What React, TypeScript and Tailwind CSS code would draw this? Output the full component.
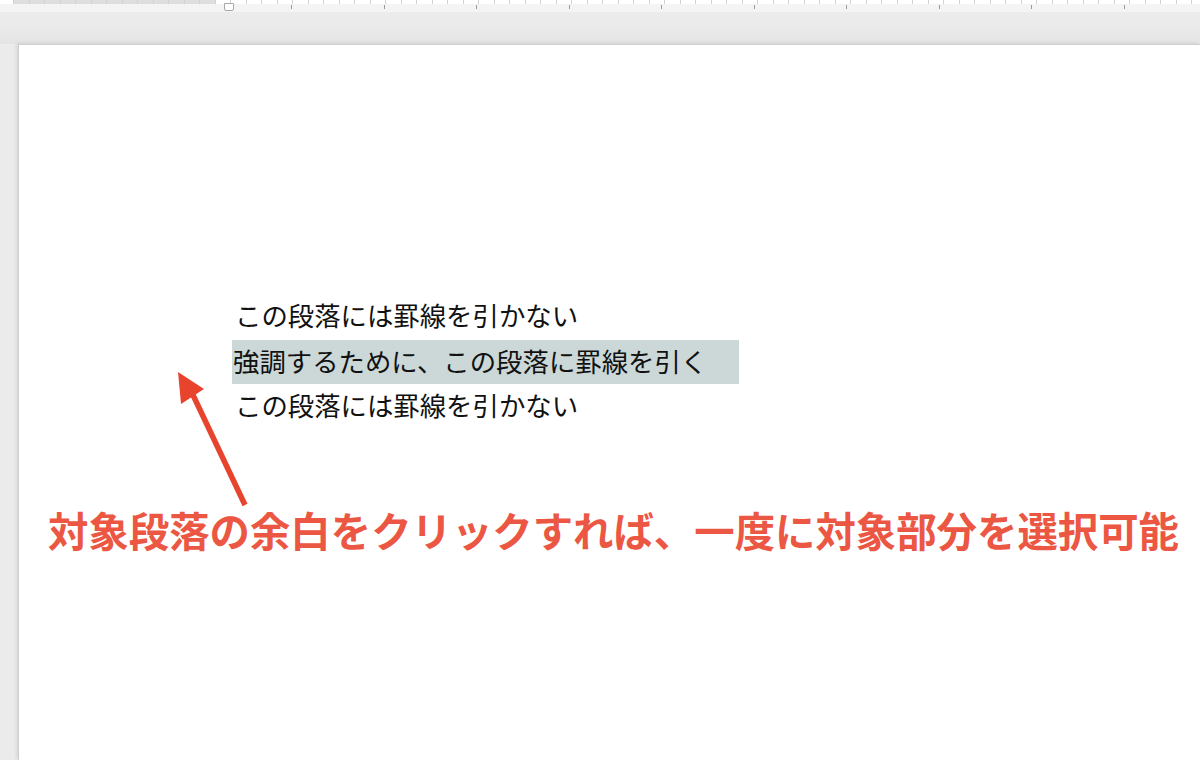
import React from "react";

const jp = { fontFamily: '"Noto Sans CJK JP", "Noto Sans", sans-serif' };

function Ruler() {
  const cells = Array.from({ length: 78 });
  const ticks = Array.from({ length: 10 });
  return (
    <div className="relative h-[12px] w-full overflow-hidden bg-[#f4f4f4]">
      {/* cell strip */}
      <div className="flex h-[4px] pl-[13px] bg-white">
        {cells.map((_, i) => (
          <div
            key={i}
            className={
              "h-full w-[15.5px] shrink-0 border-l border-[#d2d2d2] " +
              (i < 13 ? "bg-[#dedede]" : "bg-white")
            }
          />
        ))}
      </div>
      {/* tick marks */}
      <div className="flex pl-[291px]">
        {ticks.map((_, i) => (
          <div key={i} className="h-[4px] w-[92.5px] shrink-0 mt-[1px]">
            <div className="h-full w-px bg-[#9a9a9a]" />
          </div>
        ))}
      </div>
      {/* indent marker */}
      <div className="absolute left-[224px] top-[3px] h-[8px] w-[10px] rounded-b-[2px] border border-[#a8a8a8] bg-white" />
    </div>
  );
}

export default function App() {
  return (
    <div className="relative h-[760px] w-[1200px] overflow-hidden bg-[#ebebeb]">
      <Ruler />
      <div className="h-[32px] bg-gradient-to-b from-[#ececec] via-[#eaeaea] to-[#e4e4e4]" />
      <div className="ml-[18px] h-[716px] border-l border-t border-[#cfcfcf] bg-white shadow-[-2px_-1px_3px_rgba(0,0,0,0.08)]">
        <div className="pl-[213px] pt-[249px]">
          <div className="flex h-[46px] items-center pb-[4px] pl-[3px] text-[26.4px] leading-none text-[#111]" style={jp}>
            この段落には罫線を引かない
          </div>
          <div className="flex h-[44px] w-[507px] items-center bg-[#cbd8d7] pb-[2px] pl-[1px] text-[26.4px] leading-none text-[#111]" style={jp}>
            強調するために、この段落に罫線を引く
          </div>
          <div className="flex h-[45px] items-center pb-[3px] pl-[3px] text-[26.4px] leading-none text-[#111]" style={jp}>
            この段落には罫線を引かない
          </div>
        </div>
        <div className="mt-[81px] pl-[29px] text-[40.4px] font-bold leading-none text-[#eb5743]" style={jp}>
          対象段落の余白をクリックすれば、一度に対象部分を選択可能
        </div>
      </div>
      {/* arrow */}
      <svg className="absolute left-0 top-0" width="1200" height="760" viewBox="0 0 1200 760">
        <line x1="245" y1="505" x2="193" y2="395" stroke="#e8432d" strokeWidth="5.5" strokeLinecap="butt" />
        <polygon points="178,372 204,389 181,404" fill="#e8432d" />
      </svg>
    </div>
  );
}
